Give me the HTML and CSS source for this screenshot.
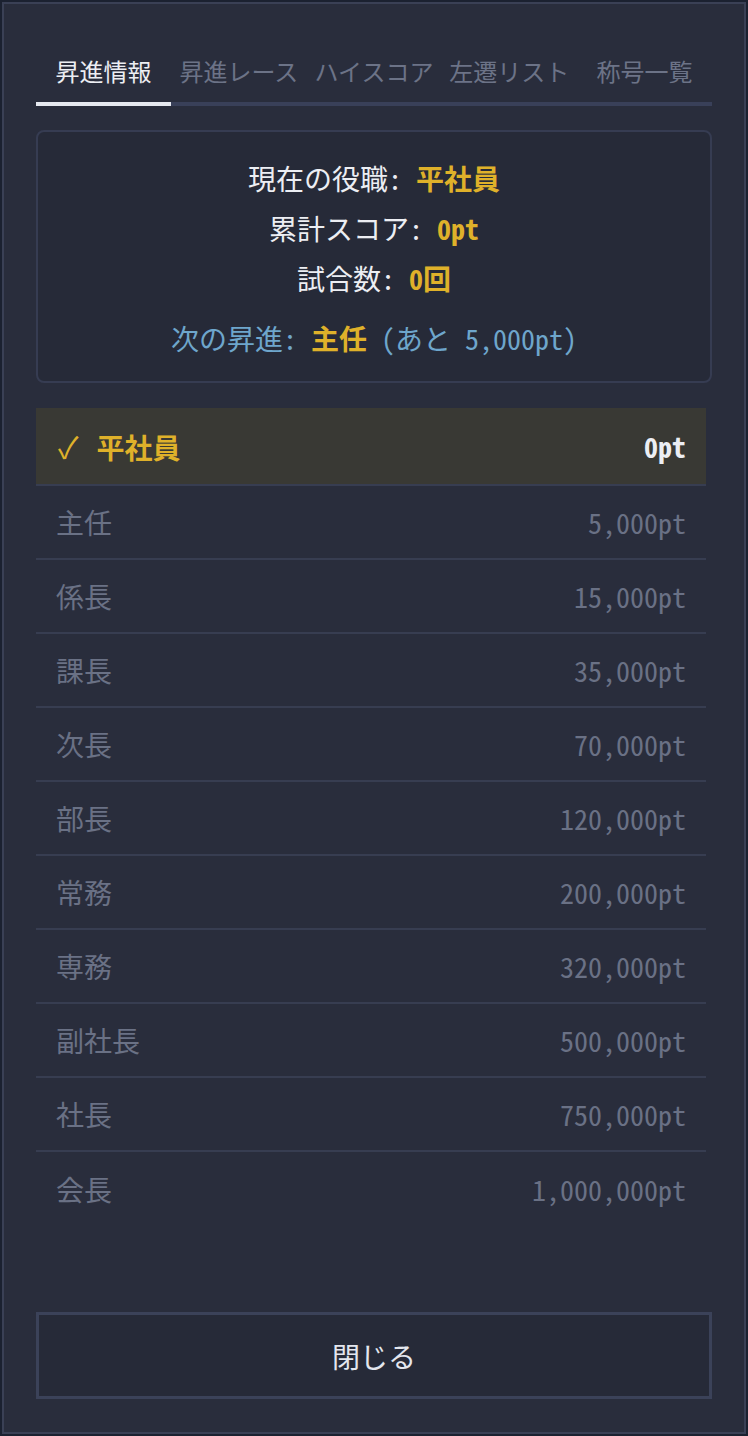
FILE: index.html
```html
<!DOCTYPE html>
<html lang="ja">
<head>
<meta charset="utf-8">
<title>昇進情報</title>
<link rel="stylesheet" href="styles.css">
</head>
<body>
<div class="modal">
  <nav class="tabs">
    <div class="tab active">昇進情報</div>
    <div class="tab">昇進レース</div>
    <div class="tab">ハイスコア</div>
    <div class="tab">左遷リスト</div>
    <div class="tab">称号一覧</div>
  </nav>

  <section class="info">
    <div class="line">現在の役職: <span class="val">平社員</span></div>
    <div class="line">累計スコア: <span class="val">0pt</span></div>
    <div class="line">試合数: <span class="val">0回</span></div>
    <div class="line next">次の昇進: <span class="val">主任</span> (あと 5,000pt)</div>
  </section>

  <ul class="ranks">
    <li class="rank current"><span class="name"><span class="check">✓</span>平社員</span><span class="pts">0pt</span></li>
    <li class="rank"><span class="name">主任</span><span class="pts">5,000pt</span></li>
    <li class="rank"><span class="name">係長</span><span class="pts">15,000pt</span></li>
    <li class="rank"><span class="name">課長</span><span class="pts">35,000pt</span></li>
    <li class="rank"><span class="name">次長</span><span class="pts">70,000pt</span></li>
    <li class="rank"><span class="name">部長</span><span class="pts">120,000pt</span></li>
    <li class="rank"><span class="name">常務</span><span class="pts">200,000pt</span></li>
    <li class="rank"><span class="name">専務</span><span class="pts">320,000pt</span></li>
    <li class="rank"><span class="name">副社長</span><span class="pts">500,000pt</span></li>
    <li class="rank"><span class="name">社長</span><span class="pts">750,000pt</span></li>
    <li class="rank"><span class="name">会長</span><span class="pts">1,000,000pt</span></li>
  </ul>

  <button class="close">閉じる</button>
</div>
</body>
</html>
```

FILE: styles.css
```css
* { box-sizing: border-box; }

html, body {
  margin: 0;
  height: 100%;
}

body {
  background: #1b2130;
  padding: 2px;
  font-family: "Noto Sans CJK JP", "Noto Sans", sans-serif;
  font-feature-settings: "hwid" 1;
  color: #eceef3;
}

.modal {
  height: 100%;
  width: 744px;
  background: #292d3c;
  border: 2px solid #3a4055;
  padding: 32px 32px 33px;
  display: flex;
  flex-direction: column;
}

.tabs {
  display: flex;
  border-bottom: 4px solid #394059;
}

.tab {
  flex: 1;
  text-align: center;
  font-size: 24px;
  line-height: 36px;
  padding: 17px 0 13px;
  color: #6c7387;
  white-space: nowrap;
  border-bottom: 4px solid transparent;
  margin-bottom: -4px;
}

.tab.active {
  color: #eceef3;
  border-bottom-color: #e6e9f0;
}

.info {
  margin-top: 24px;
  background: #262a38;
  border: 2px solid #363c52;
  border-radius: 8px;
  padding: 21px 0 18px;
  text-align: center;
  font-size: 28px;
  line-height: 50px;
}

.line .val {
  color: #dfb12a;
  font-weight: 700;
}

.line.next {
  margin-top: 10px;
  color: #6ea6cc;
}

.ranks {
  list-style: none;
  margin: 25px 6px 0 0;
  padding: 0;
  flex: 1;
}

.rank {
  display: flex;
  justify-content: space-between;
  align-items: center;
  height: 74px;
  padding: 0 20px;
  font-size: 28px;
  color: #6a7185;
  border-bottom: 2px solid #373d51;
}

.rank:last-child {
  border-bottom: none;
}

.rank.current {
  height: 78px;
  background: #393934;
  color: #dfb12a;
  font-weight: 700;
}

.rank.current .pts {
  color: #eceef3;
}

.check {
  display: inline-block;
  font-weight: 400;
  font-size: 30px;
  margin: 0 18px 0 2px;
}

.close {
  height: 87px;
  width: 100%;
  background: #262a38;
  border: 3px solid #3b4259;
  color: #e3e6ee;
  font-family: inherit;
  font-feature-settings: inherit;
  font-size: 28px;
  cursor: pointer;
}
```
